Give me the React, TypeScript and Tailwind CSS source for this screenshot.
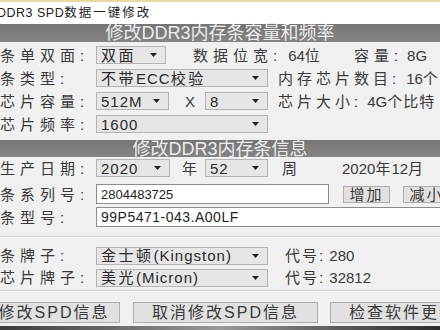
import React from "react";

const CJK = /([\u3400-\u9fff\uff00-\uffef:]+)/;

// spaced out CJK runs, latin runs left tight
function T({ s, cjk = "tracking-[5px]" }: { s: string; cjk?: string }) {
  return (
    <>
      {s.split(CJK).map((p, i) =>
        CJK.test(p) ? (
          <span key={i} className={cjk}>
            {p}
          </span>
        ) : (
          <span key={i}>{p}</span>
        )
      )}
    </>
  );
}

function Arrow() {
  return (
    <svg width="7" height="4" viewBox="0 0 7 4" className="shrink-0">
      <path d="M0 0h7L3.5 4z" fill="#222" />
    </svg>
  );
}

function Select({ text, w }: { text: string; w: string }) {
  return (
    <div
      className={`${w} h-[18px] shrink-0 flex items-center justify-between border border-[#b4b4b4] bg-[#e6e6e6] pl-[4px] pr-[8px] text-[15px] leading-none text-[#2a2a2a]`}
    >
      <span className="tracking-[1px] whitespace-nowrap">
        <T s={text} cjk="tracking-[2.5px]" />
      </span>
      <Arrow />
    </div>
  );
}

function Label({ s }: { s: string }) {
  return (
    <div className="w-[96px] shrink-0 text-[15px] leading-none text-[#3a3a3a] whitespace-nowrap">
      <T s={s} />
    </div>
  );
}

function Txt({ s, className = "", cjk = "tracking-[4px]" }: { s: string; className?: string; cjk?: string }) {
  return (
    <div className={`shrink-0 text-[15px] leading-none text-[#3a3a3a] whitespace-nowrap ${className}`}>
      <T s={s} cjk={cjk} />
    </div>
  );
}

function Header({ s, h }: { s: string; h: string }) {
  return (
    <div
      className={`${h} flex items-center justify-center bg-gradient-to-b from-[#767676] to-[#858585] text-[18px] leading-none text-[#ececec] whitespace-nowrap`}
    >
      {s}
    </div>
  );
}

function Btn({ s, w, className = "" }: { s: string; w: string; className?: string }) {
  return (
    <div
      className={`${w} shrink-0 flex items-center justify-center border border-[#adadad] bg-[#e1e1e1] leading-none text-[#3a3a3a] whitespace-nowrap tracking-[2px] ${className}`}
    >
      {s}
    </div>
  );
}

export default function App() {
  return (
    <div
      className="w-[440px] h-[330px] overflow-hidden flex flex-col bg-[#f0f0f0]"
      style={{ fontFamily: '"Liberation Sans", "Noto Sans CJK SC", sans-serif' }}
    >
      {/* title bar */}
      <div className="h-[2px] bg-[#e8d9a6]" />
      <div className="h-[22px] bg-white flex items-center">
        <span className="-ml-[3px] text-[12.5px] leading-none text-[#222] tracking-[0.5px] whitespace-nowrap">
          DDR3 SPD<span className="tracking-[2px]">数据一键修改</span>
        </span>
      </div>

      <Header s="修改DDR3内存条容量和频率" h="h-[18px]" />

      {/* capacity / frequency */}
      <div className="flex flex-col gap-[5px] mt-[4px]">
        <div className="h-[18px] flex items-center">
          <Label s="条单双面:" />
          <Select text="双面" w="w-[70px]" />
          <Txt s="数据位宽:" className="ml-[27px]" cjk="tracking-[5px]" />
          <Txt s="64位" className="ml-[6px]" />
          <Txt s="容量:" className="ml-[30px]" cjk="tracking-[5px]" />
          <Txt s="8G" className="ml-[4px]" />
        </div>
        <div className="h-[18px] flex items-center">
          <Label s="条类型:" />
          <Select text="不带ECC校验" w="w-[172px]" />
          <Txt s="内存芯片数目:" className="ml-[10px]" />
          <Txt s="16个" className="ml-[6px]" />
        </div>
        <div className="h-[18px] flex items-center">
          <Label s="芯片容量:" />
          <Select text="512M" w="w-[73px]" />
          <Txt s="X" className="ml-[16px] w-[20px]" />
          <Select text="8" w="w-[63px]" />
          <Txt s="芯片大小:" className="ml-[10px]" />
          <Txt s="4G个比特" className="ml-[5px]" cjk="tracking-[1px]" />
        </div>
        <div className="h-[18px] flex items-center">
          <Label s="芯片频率:" />
          <Select text="1600" w="w-[172px]" />
        </div>
      </div>

      <div className="mt-[7px]">
        <Header s="修改DDR3内存条信息" h="h-[17px]" />
      </div>

      {/* module info */}
      <div className="h-[18px] mt-[2px] flex items-center">
        <Label s="生产日期:" />
        <Select text="2020" w="w-[74px]" />
        <Txt s="年" className="ml-[12px] w-[23px]" />
        <Select text="52" w="w-[63px]" />
        <Txt s="周" className="ml-[14px]" />
        <Txt s="2020年12月" className="ml-[41px]" cjk="tracking-[1px]" />
      </div>
      <div className="h-[20px] mt-[7px] flex items-center">
        <Label s="条系列号:" />
        <div className="w-[233px] h-[20px] shrink-0 border border-[#8c8c8c] bg-white pl-[4px] flex items-center text-[13px] leading-none text-[#222]">
          2804483725
        </div>
        <Btn s="增加" w="w-[47px]" className="ml-[14px] h-[17px] text-[15px]" />
        <Btn s="减小" w="w-[47px]" className="ml-[13px] h-[17px] text-[15px]" />
      </div>
      <div className="h-[20px] mt-[3px] flex items-center">
        <Label s="条型号:" />
        <div className="w-[360px] h-[20px] shrink-0 border border-[#8c8c8c] bg-white pl-[4px] flex items-center text-[14px] leading-none text-[#222] tracking-[0.5px]">
          99P5471-043.A00LF
        </div>
      </div>

      <div className="mt-[9px] border-t border-[#d2d2d2] border-b border-b-white" />

      <div className="flex flex-col gap-[5px] mt-[9px]">
        <div className="h-[17px] flex items-center">
          <Label s="条牌子:" />
          <Select text="金士顿(Kingston)" w="w-[172px]" />
          <Txt s="代号: 280" className="ml-[17px]" cjk="tracking-[2px]" />
        </div>
        <div className="h-[17px] flex items-center">
          <Label s="芯片牌子:" />
          <Select text="美光(Micron)" w="w-[172px]" />
          <Txt s="代号: 32812" className="ml-[17px]" cjk="tracking-[2px]" />
        </div>
      </div>

      <div className="mt-[4px] border-t border-[#d2d2d2] border-b border-b-white" />

      <div className="flex mt-[10px] -ml-[12px]">
        <Btn s="修改SPD信息" w="w-[132px]" className="h-[21px] text-[16px]" />
        <Btn s="取消修改SPD信息" w="w-[185px]" className="ml-[13px] h-[21px] text-[16px]" />
        <Btn s="检查软件更新" w="w-[130px]" className="ml-[12px] h-[21px] text-[16px] justify-start pl-[18px]" />
      </div>

      <div className="mt-auto h-[4px] bg-gradient-to-r from-[#3c3c3c] via-[#9a9a9a] to-[#2c2c2c]" />
    </div>
  );
}
